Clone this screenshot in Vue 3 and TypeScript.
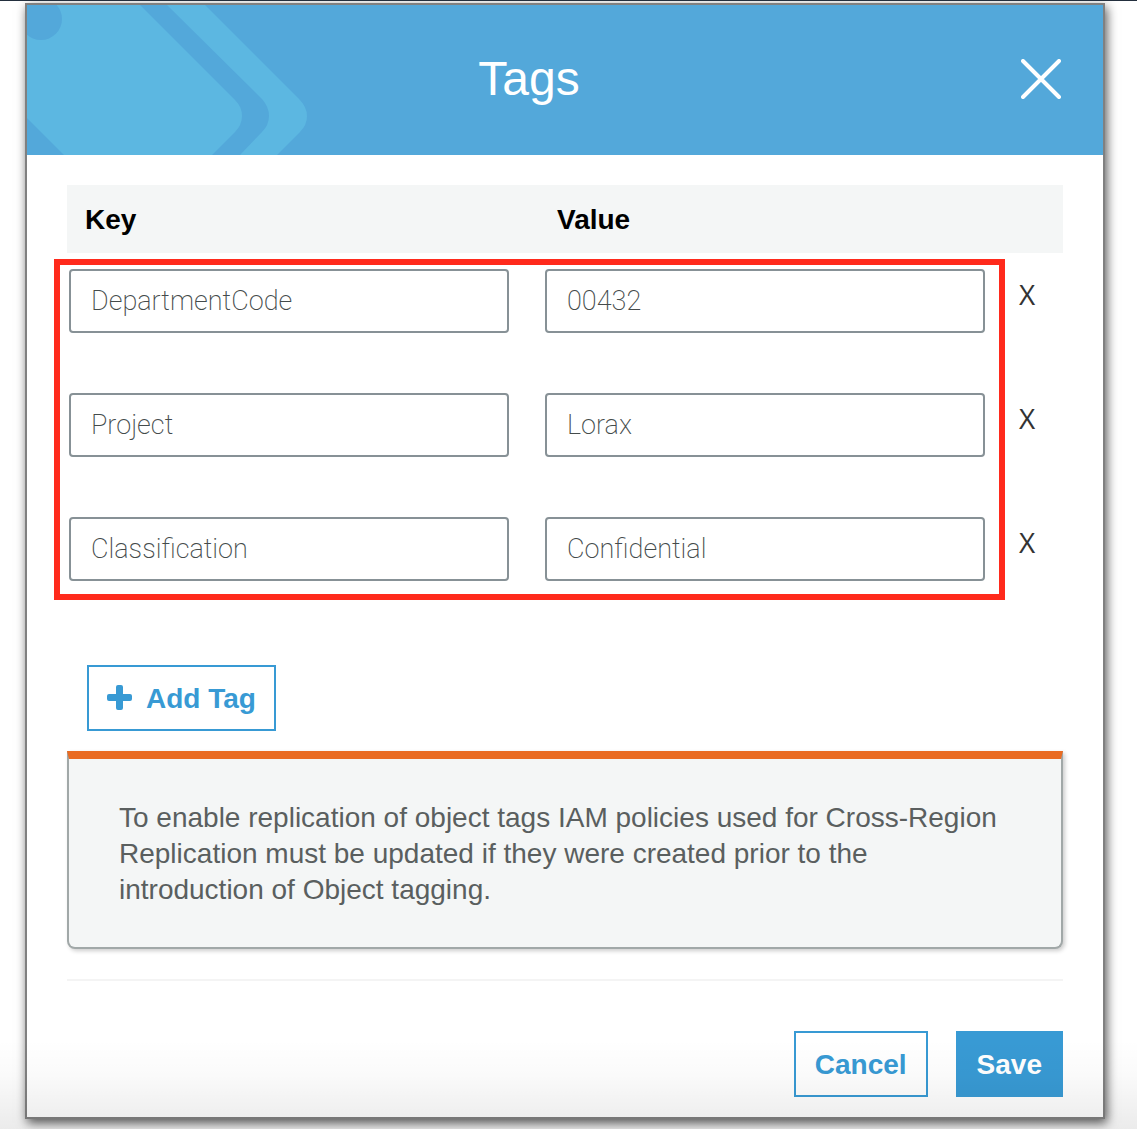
<script setup lang="ts">
import { ref } from 'vue'

interface Tag {
  id: number
  key: string
  value: string
}

const tags = ref<Tag[]>([
  { id: 1, key: 'DepartmentCode', value: '00432' },
  { id: 2, key: 'Project', value: 'Lorax' },
  { id: 3, key: 'Classification', value: 'Confidential' },
])

let nextId = 4

function addTag(): void {
  tags.value.push({ id: nextId++, key: '', value: '' })
}

function removeTag(id: number): void {
  tags.value = tags.value.filter((tag) => tag.id !== id)
}
</script>

<template>
  <div class="page">
    <section class="dialog" role="dialog" aria-labelledby="dialog-title">
      <header class="header">
        <svg class="pattern" width="290" height="150" viewBox="0 0 290 150" aria-hidden="true">
          <path d="M0 0H113L208 95Q215 102 215 111Q215 120 208 127L185 150H37L0 113Z" fill="#5cb7e1" />
          <path
            d="M140 0H178L272 94Q280 102 280 111Q280 120 273 127L250 150H213L235 127Q242 120 242 111Q242 102 235 94Z"
            transform="translate(0 0)"
            fill="#5cb7e1"
          />
          <circle cx="14" cy="14" r="21" fill="#53a8da" />
        </svg>
        <h1 id="dialog-title" class="title">Tags</h1>
        <button class="close" type="button" aria-label="Close">
          <svg width="40" height="40" viewBox="0 0 40 40" aria-hidden="true">
            <path d="M2 2L38 38M38 2L2 38" stroke="#fff" stroke-width="4" stroke-linecap="round" />
          </svg>
        </button>
      </header>

      <form class="body" @submit.prevent>
        <div class="tags">
          <table class="table">
            <colgroup>
              <col />
              <col />
              <col class="col-remove" />
            </colgroup>
            <thead>
              <tr>
                <th class="head-key" scope="col">Key</th>
                <th class="head-value" scope="col">Value</th>
                <td></td>
              </tr>
            </thead>
            <tbody>
              <tr v-for="tag in tags" :key="tag.id">
                <td class="cell-key">
                  <input v-model="tag.key" class="input" type="text" aria-label="Key" />
                </td>
                <td class="cell-value">
                  <input v-model="tag.value" class="input" type="text" aria-label="Value" />
                </td>
                <td class="cell-remove">
                  <button class="remove" type="button" aria-label="Remove tag" @click="removeTag(tag.id)">X</button>
                </td>
              </tr>
            </tbody>
          </table>
          <div class="highlight"></div>
        </div>

        <button class="button add" type="button" @click="addTag">
          <svg width="26" height="26" viewBox="0 0 26 26" aria-hidden="true">
            <path
              d="M11 0H14Q16 0 16 2V9H23Q25 9 25 11V14Q25 16 23 16H16V23Q16 25 14 25H11Q9 25 9 23V16H2Q0 16 0 14V11Q0 9 2 9H9V2Q9 0 11 0Z"
              fill="#389ad4"
            />
          </svg>
          <span class="label">Add Tag</span>
        </button>

        <p class="notice">
          To enable replication of object tags IAM policies used for Cross-Region Replication must be updated if they
          were created prior to the introduction of Object tagging.
        </p>

        <footer class="footer">
          <button class="button" type="button"><span class="label">Cancel</span></button>
          <button class="button primary" type="submit"><span class="label">Save</span></button>
        </footer>
      </form>
    </section>
    <div class="shade"></div>
  </div>
</template>

<style>
body {
  margin: 0;
  background: #fff;
}
</style>

<style scoped>
.page {
  position: relative;
  box-sizing: border-box;
  padding: 2px 32px 10px 25px;
  border-top: 1px solid #232f3e;
  font-family: "Liberation Sans", Arial, sans-serif;
  font-size: 28px;
  line-height: 36px;
  overflow: hidden;
}

.shade {
  position: absolute;
  right: 0;
  bottom: 0;
  left: 0;
  height: 90px;
  background: linear-gradient(rgba(0, 0, 0, 0), rgba(0, 0, 0, 0.02) 40%, rgba(0, 0, 0, 0.08));
  pointer-events: none;
}

.dialog {
  border: 2px solid #808080;
  background: #fff;
  box-shadow: 2px 4px 10px rgba(0, 0, 0, 0.65);
}

.header {
  position: relative;
  display: flex;
  align-items: center;
  box-sizing: border-box;
  height: 150px;
  padding: 0 42px 2px 10px;
  background: #53a8da;
}

.pattern {
  position: absolute;
  top: 0;
  left: 0;
}

.title {
  flex: 1;
  margin: 0;
  color: #fff;
  font-size: 48px;
  font-weight: 400;
  line-height: 56px;
  text-align: center;
}

.close {
  width: 40px;
  height: 40px;
  padding: 0;
  border: 0;
  background: none;
  cursor: pointer;
}

.close svg {
  display: block;
}

.body {
  padding: 30px 40px 20px;
}

.tags {
  position: relative;
}

.table {
  width: 100%;
  border-collapse: collapse;
  table-layout: fixed;
}

.col-remove {
  width: 48px;
}

.table td {
  padding: 0;
}

.table thead tr {
  background: #f4f6f6;
}

.table th {
  height: 68px;
  box-sizing: border-box;
  color: #000;
  font-weight: 700;
  text-align: left;
}

.table .head-key {
  padding: 2px 18px 0;
}

.table .head-value {
  padding: 2px 16px 0;
}

.table tbody td {
  height: 124px;
  box-sizing: border-box;
  vertical-align: top;
}

.table .cell-key {
  padding: 16px 32px 44px 2px;
}

.table .cell-value {
  padding: 16px 30px 44px 4px;
}

.table .cell-remove {
  padding: 23px 0 0 4px;
}

.input {
  display: block;
  box-sizing: border-box;
  width: 100%;
  height: 64px;
  padding: 0 20px;
  border: 2px solid #879196;
  border-radius: 4px;
  background: #fff;
  color: #444b4b;
  font-family: Roboto, "Liberation Sans", sans-serif;
  font-size: 27px;
  font-weight: 200;
}

.remove {
  display: block;
  padding: 0;
  border: 0;
  background: none;
  color: #333;
  font-family: "Open Sans", sans-serif;
  font-size: 28px;
  font-weight: 500;
  line-height: 36px;
  cursor: pointer;
}

.highlight {
  position: absolute;
  top: 74px;
  right: 58px;
  bottom: 25px;
  left: -13px;
  border: 6px solid #ff2a1c;
  pointer-events: none;
}

.button {
  display: inline-flex;
  align-items: center;
  justify-content: center;
  box-sizing: border-box;
  height: 66px;
  padding: 0 19px;
  border: 2px solid #389ad4;
  background: #fff;
  color: #389ad4;
  font-family: inherit;
  font-size: 28px;
  font-weight: 700;
  line-height: 36px;
  cursor: pointer;
}

.label {
  padding-top: 2px;
}

.primary {
  background: #389ad4;
  color: #fff;
}

.add {
  display: flex;
  gap: 13px;
  margin: 40px 0 20px 20px;
  padding: 0 18px;
}

.notice {
  margin: 0;
  padding: 41px 50px 39px;
  border: 2px solid #a1a8a8;
  border-top: 8px solid #e96b22;
  border-radius: 0 0 8px 8px;
  background: #f4f6f6;
  box-shadow: 2px 2px 4px rgba(0, 0, 0, 0.2);
  color: #5a5f5f;
}

.footer {
  display: flex;
  justify-content: flex-end;
  gap: 28px;
  margin-top: 30px;
  padding-top: 50px;
  border-top: 2px solid #f4f4f4;
}
</style>
